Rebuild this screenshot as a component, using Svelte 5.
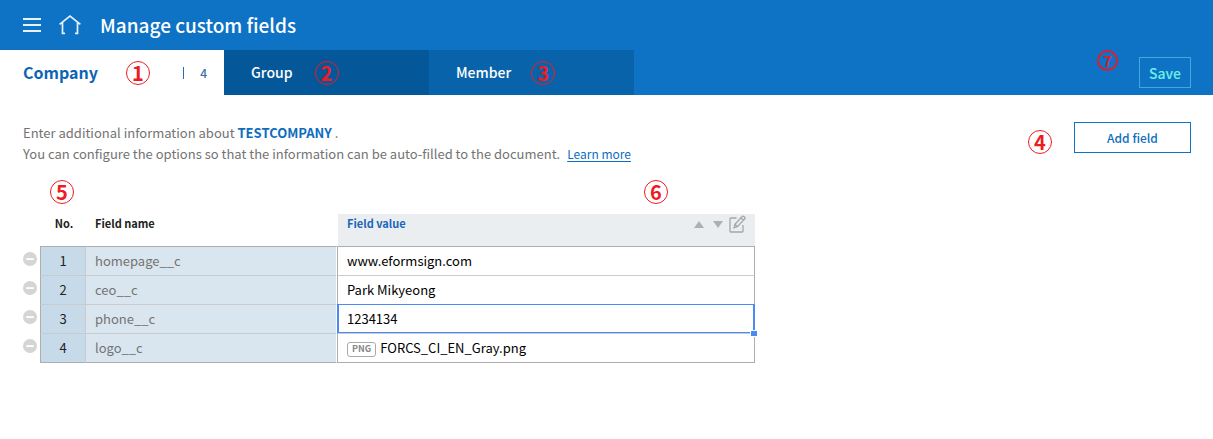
<script>
  let active = $state('Company');
  const rows = [
    { name: 'homepage__c', value: 'www.eformsign.com' },
    { name: 'ceo__c', value: 'Park Mikyeong' },
    { name: 'phone__c', value: '1234134', selected: true },
    { name: 'logo__c', value: 'FORCS_CI_EN_Gray.png', type: 'PNG' }
  ];
</script>

<header class="topbar">
  <button class="icon-btn" aria-label="Menu">
    <svg width="18" height="16" viewBox="0 0 18 16" fill="#e6f1fa">
      <path d="M0 1h18v2H0zM0 7h18v2H0zM0 13h18v2H0z" />
    </svg>
  </button>
  <a class="home" href="#home" aria-label="Home">
    <svg width="22" height="20" viewBox="0 0 22 20" fill="none" stroke="#e6f1fa" stroke-width="1.7">
      <path d="M0.6 9.4 11 1.2l10.4 8.2M3.5 7.6V18.4H6M18.5 7.6V18.4H16" />
    </svg>
  </a>
  <h1>Manage custom fields</h1>
</header>

<nav class="tabbar">
  <button class="tab company" onclick={() => (active = 'Company')} aria-current={active === 'Company'}>
    <span class="label">Company</span>
    <span class="marker">1</span>
    <span class="count">4</span>
  </button>
  <button class="tab group" onclick={() => (active = 'Group')}>
    <span class="label">Group</span>
    <span class="marker dim">2</span>
  </button>
  <button class="tab member" onclick={() => (active = 'Member')}>
    <span class="label">Member</span>
    <span class="marker dim">3</span>
  </button>
  <div class="save-area">
    <span class="marker small">7</span>
    <button class="save">Save</button>
  </div>
</nav>

<main>
  <section class="intro">
    <p>
      Enter additional information about <strong>TESTCOMPANY</strong> .<br />
      You can configure the options so that the information can be auto-filled to the document.
      <a class="learn" href="#learn">Learn more</a>
    </p>
    <div class="add-area">
      <span class="marker">4</span>
      <button class="add">Add field</button>
    </div>
  </section>

  <div class="callouts">
    <span class="marker">5</span>
    <span class="marker">6</span>
  </div>

  <table>
    <colgroup>
      <col class="c-remove" /><col class="c-no" /><col class="c-name" /><col class="c-value" />
    </colgroup>
    <thead>
      <tr>
        <td></td>
        <th class="no" scope="col">No.</th>
        <th scope="col">Field name</th>
        <th class="value" scope="col">
          <div class="value-head">
            <span>Field value</span>
            <span class="tools">
              <button class="icon-btn" aria-label="Move up">
                <svg width="10" height="7" viewBox="0 0 10 7" fill="#adb0b3"><path d="M5 0l5 7H0z" /></svg>
              </button>
              <button class="icon-btn" aria-label="Move down">
                <svg width="10" height="7" viewBox="0 0 10 7" fill="#adb0b3"><path d="M0 0h10L5 7z" /></svg>
              </button>
              <button class="icon-btn edit" aria-label="Edit">
                <svg width="17" height="18" viewBox="0 0 17 18" fill="none" stroke="#a5a7a9" stroke-width="1.3">
                  <path d="M7.5 3H1.7Q1 3 1 3.7V16.3Q1 17 1.7 17H13.3Q14 17 14 16.3V10" />
                  <path d="M5 12.7l1-3.5L13.4 1.3Q14 .8 14.6 1.3l1.2 1.2q.6.6 0 1.2L8.4 11.6zM12 2.8l2.4 2.4M6 9.2l2.4 2.4" />
                </svg>
              </button>
            </span>
          </div>
        </th>
      </tr>
    </thead>
    <tbody>
      {#each rows as row, i}
        <tr>
          <td class="remove">
            <button class="icon-btn" aria-label="Remove {row.name}">
              <svg width="14" height="14" viewBox="0 0 14 14">
                <circle cx="7" cy="7" r="7" fill="#d5d5d5" />
                <path d="M3.2 6.2h7.6v1.8H3.2z" fill="#fff" />
              </svg>
            </button>
          </td>
          <td class="no">{i + 1}</td>
          <td class="name">{row.name}</td>
          <td class="value" class:selected={row.selected}>
            {#if row.type}<span class="type">{row.type}</span>{/if}{row.value}
          </td>
        </tr>
      {/each}
    </tbody>
  </table>
</main>

<style>
  :global(body) {
    background: #fff;
    font-family: "Noto Sans CJK KR", "Noto Sans", sans-serif;
    font-size: 13px;
    line-height: 21px;
    color: #222;
  }
  button {
    font: inherit;
    border: 0;
    padding: 0;
    background: none;
    cursor: pointer;
  }
  svg {
    display: block;
  }
  .topbar {
    display: flex;
    align-items: center;
    height: 50px;
    padding: 0 23px;
    background: #0e73c5;
  }
  .icon-btn {
    display: block;
  }
  .home {
    margin: 0 19px 0 18px;
  }
  h1 {
    margin: 0;
    font-size: 19px;
    font-weight: 500;
    line-height: 50px;
    color: #fff;
  }
  .tabbar {
    display: flex;
    height: 45px;
    background: #0e73c5;
  }
  .tab {
    display: flex;
    align-items: center;
    box-sizing: border-box;
    width: 205px;
    padding: 0 27px;
    color: #fff;
    font-size: 14px;
    font-weight: 500;
    text-align: left;
  }
  .company {
    width: 224px;
    padding: 0 17px 0 23px;
    background: #fff;
    color: #0d64b5;
    font-size: 16px;
    font-weight: 700;
  }
  .company .marker {
    margin-left: 28px;
  }
  .group {
    background: #045798;
  }
  .member {
    background: #0863ab;
  }
  .tab .dim {
    margin-left: 22px;
  }
  .member .dim {
    margin-left: 20px;
  }
  .count {
    margin-left: auto;
    padding-left: 16px;
    border-left: 1px solid #2a6da8;
    font-size: 12px;
    font-weight: 500;
    line-height: 12px;
    color: #3a6ea8;
  }
  .marker {
    display: inline-block;
    box-sizing: border-box;
    flex: none;
    width: 24px;
    height: 24px;
    border: 1px solid #ed1c24;
    border-radius: 50%;
    font-family: "Noto Sans CJK KR", "Noto Sans", sans-serif;
    font-size: 20px;
    font-weight: 700;
    line-height: 22px;
    text-align: center;
    color: #ed1c24;
  }
  .small {
    width: 21px;
    height: 21px;
    border-width: 2px;
    font-size: 15px;
    line-height: 17px;
    color: #d81f33;
    border-color: #d81f33;
  }
  .save-area {
    display: flex;
    margin-left: auto;
    padding-right: 22px;
    gap: 21px;
  }
  .save {
    height: 31px;
    width: 52px;
    margin-top: 7px;
    padding-top: 1px;
    border: 1px solid #43a9dc;
    font-size: 14px;
    font-weight: 500;
    color: #6ff0e6;
  }
  main {
    padding: 27px 22px 24px 23px;
  }
  .intro {
    display: flex;
    justify-content: space-between;
  }
  .intro p {
    margin: 0;
    color: #737373;
  }
  strong {
    font-weight: 700;
    color: #0e6dc0;
  }
  .learn {
    margin-left: 4px;
    font-size: 12px;
    color: #0e6dc0;
    text-underline-offset: 2px;
  }
  .add-area {
    display: flex;
    gap: 22px;
  }
  .add-area .marker {
    margin-top: 8px;
  }
  .add {
    width: 117px;
    height: 31px;
    border: 1px solid #0e73c5;
    font-size: 12px;
    font-weight: 500;
    color: #0e6dc0;
  }
  .callouts {
    display: flex;
    gap: 570px;
    padding: 16px 0 10px 27px;
  }
  table {
    width: 732px;
    table-layout: fixed;
    border-collapse: separate;
    border-spacing: 0;
  }
  .c-remove {
    width: 17px;
  }
  .c-no {
    width: 46px;
  }
  .c-name {
    width: 251px;
  }
  th,
  td {
    box-sizing: border-box;
    height: 29px;
    padding: 0 9px 2px;
    text-align: left;
    vertical-align: middle;
  }
  th {
    height: 33px;
    border-bottom: 1px solid #adadad;
    font-size: 11px;
    font-weight: 700;
    line-height: 18px;
    vertical-align: top;
  }
  .no {
    padding-left: 0;
    padding-right: 0;
    text-align: center;
  }
  th.no {
    padding-left: 2px;
  }
  .value-head {
    display: flex;
    justify-content: space-between;
  }
  th.value {
    border-left: 1px solid #fff;
    background: #ebeef1;
    color: #1a66ba;
  }
  .tools {
    display: flex;
    align-items: center;
    height: 20px;
    gap: 9px;
  }
  .edit {
    margin-left: -3px;
  }
  td.remove {
    padding: 5px 0 0;
    vertical-align: top;
  }
  tbody .no,
  .name,
  td.value {
    border-bottom: 1px solid #c9cbcd;
  }
  tbody .no {
    border-left: 1px solid #adadad;
    border-right: 1px solid #c9cbcd;
    background: #c6daea;
  }
  .name {
    border-right: 1px solid #fff;
    background: #dae6ef;
    color: #737373;
  }
  td.value {
    position: relative;
    border-left: 1px solid #adadad;
    border-right: 1px solid #adadad;
    color: #000;
  }
  tbody tr:last-child .no,
  tbody tr:last-child .name,
  tbody tr:last-child .value {
    border-bottom-color: #adadad;
  }
  .selected::before {
    content: "";
    position: absolute;
    inset: -1px -1px 0;
    border: solid #4a8af4;
    border-width: 1px 2px;
  }
  .selected::after {
    content: "";
    position: absolute;
    right: -4px;
    bottom: -4px;
    z-index: 1;
    width: 6px;
    height: 5px;
    border: 1px solid #fff;
    background: #4a8af4;
  }
  .type {
    display: inline-block;
    box-sizing: border-box;
    height: 15px;
    margin-right: 4px;
    padding: 0 4px;
    border: 1px solid #aaa;
    border-radius: 3px;
    font-size: 9px;
    font-weight: 700;
    line-height: 12px;
    vertical-align: 1px;
    color: #888;
  }
</style>
